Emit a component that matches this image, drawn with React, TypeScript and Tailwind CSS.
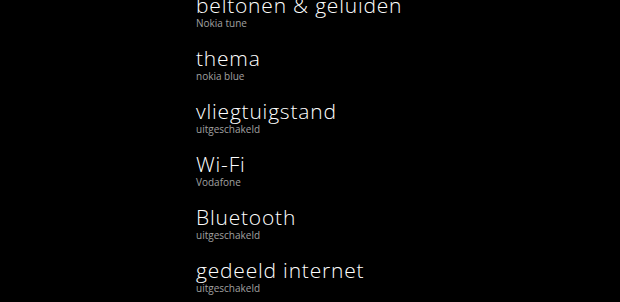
import React from 'react';

// Settings list rows (title + status line)
const ITEMS = [
  { title: 'beltonen & geluiden', sub: 'Nokia tune' },
  { title: 'thema', sub: 'nokia blue' },
  { title: 'vliegtuigstand', sub: 'uitgeschakeld' },
  { title: 'Wi-Fi', sub: 'Vodafone' },
  { title: 'Bluetooth', sub: 'uitgeschakeld' },
  { title: 'gedeeld internet', sub: 'uitgeschakeld' },
];

const App = () => {
  return (
    <div className="w-[620px] h-[302px] bg-black overflow-hidden font-['Open_Sans',sans-serif]">
      <div className="flex flex-col gap-[16px] pl-[196px] -mt-[7px]">
        {ITEMS.map(item => (
          <div key={item.title} className="flex flex-col">
            <span className="text-[21px] leading-[24px] font-light tracking-[0.8px] text-white whitespace-nowrap">{item.title}</span>
            <span className="text-[10px] leading-[13px] text-[#a0a0a0]">{item.sub}</span>
          </div>
        ))}
      </div>
    </div>
  );
};

export default App;
